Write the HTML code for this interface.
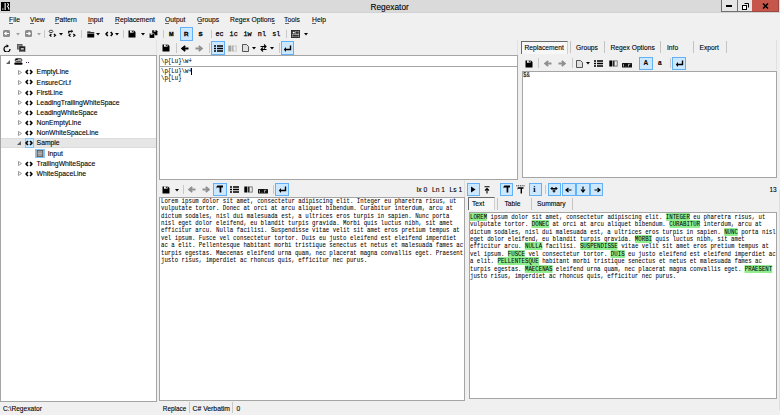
<!DOCTYPE html>
<html><head><meta charset="utf-8"><style>
html,body{margin:0;padding:0;}
.t{position:absolute;white-space:pre;-webkit-text-stroke:0.1px #000;}
.m{position:absolute;white-space:pre;font:6.8px/7.4px "Liberation Mono", monospace;transform:scaleX(0.842);transform-origin:0 0;color:#000;-webkit-text-stroke:0.05px #000;}
body{width:780px;height:415px;position:relative;overflow:hidden;background:#f0f0f0;font-family:"Liberation Sans", sans-serif;}
</style></head><body>
<div style="position:absolute;left:0px;top:0px;width:780px;height:12.6px;background:#dadada"></div>
<div style="position:absolute;left:0px;top:12px;width:780px;height:0.6px;background:#d2d2d2"></div>
<div style="position:absolute;left:1px;top:2px;width:9px;height:9px;background:#000"></div>
<svg style="position:absolute;left:1px;top:2px;" width="9" height="9" viewBox="0 0 9 9"><rect x="1" y="6.2" width="1.6" height="1.8" fill="#777"/><rect x="3.6" y="1" width="1.1" height="7" fill="#fff"/><path d="M6.3 1.3C7.8 1.8 7.8 3.2 6.6 4.3C7.6 5.2 7.9 6.5 8 7.6" stroke="#fff" stroke-width="1.1" fill="none"/></svg>
<div class="t" style="left:370.5px;top:2.8px;font:8.3px/8.3px 'Liberation Sans', sans-serif;color:#000;">Regexator</div>
<div style="position:absolute;left:721px;top:0px;width:17px;height:11.5px;background:#e6e6e6;border:1px solid #707070;border-top:none;box-sizing:border-box"></div>
<div style="position:absolute;left:737px;top:0px;width:16px;height:11.5px;background:#e6e6e6;border:1px solid #707070;border-top:none;box-sizing:border-box"></div>
<div style="position:absolute;left:752px;top:0px;width:27px;height:11.5px;background:#c7564a;border:1px solid #9a4a42;border-top:none;border-left:none;box-sizing:border-box"></div>
<div style="position:absolute;left:726px;top:5px;width:6px;height:2px;background:#000"></div>
<svg style="position:absolute;left:741px;top:2px;" width="8" height="8" viewBox="0 0 8 8"><rect x="1.5" y="3.5" width="4" height="4" fill="#fff" stroke="#000"/><path d="M3.5 1.5H7.5V5.5" fill="none" stroke="#000"/></svg>
<svg style="position:absolute;left:761px;top:2px;" width="9" height="8" viewBox="0 0 9 8"><path d="M2 1.5L7 6.5M7 1.5L2 6.5" stroke="#000" stroke-width="1.6"/></svg>
<div class="t" style="left:9px;top:16.4px;font:7.7px/7.7px 'Liberation Sans', sans-serif;color:#000;transform:scaleX(0.88);transform-origin:0 0">File</div>
<div style="position:absolute;left:9.3px;top:23.2px;width:4px;height:0.8px;background:#666"></div>
<div class="t" style="left:30px;top:16.4px;font:7.7px/7.7px 'Liberation Sans', sans-serif;color:#000;transform:scaleX(0.88);transform-origin:0 0">View</div>
<div style="position:absolute;left:30.3px;top:23.2px;width:4px;height:0.8px;background:#666"></div>
<div class="t" style="left:55px;top:16.4px;font:7.7px/7.7px 'Liberation Sans', sans-serif;color:#000;transform:scaleX(0.88);transform-origin:0 0">Pattern</div>
<div style="position:absolute;left:55.3px;top:23.2px;width:4px;height:0.8px;background:#666"></div>
<div class="t" style="left:88px;top:16.4px;font:7.7px/7.7px 'Liberation Sans', sans-serif;color:#000;transform:scaleX(0.88);transform-origin:0 0">Input</div>
<div style="position:absolute;left:88.3px;top:23.2px;width:4px;height:0.8px;background:#666"></div>
<div class="t" style="left:114.6px;top:16.4px;font:7.7px/7.7px 'Liberation Sans', sans-serif;color:#000;transform:scaleX(0.88);transform-origin:0 0">Replacement</div>
<div style="position:absolute;left:114.89999999999999px;top:23.2px;width:4px;height:0.8px;background:#666"></div>
<div class="t" style="left:165px;top:16.4px;font:7.7px/7.7px 'Liberation Sans', sans-serif;color:#000;transform:scaleX(0.88);transform-origin:0 0">Output</div>
<div style="position:absolute;left:165.3px;top:23.2px;width:4px;height:0.8px;background:#666"></div>
<div class="t" style="left:197.4px;top:16.4px;font:7.7px/7.7px 'Liberation Sans', sans-serif;color:#000;transform:scaleX(0.88);transform-origin:0 0">Groups</div>
<div style="position:absolute;left:197.70000000000002px;top:23.2px;width:4px;height:0.8px;background:#666"></div>
<div class="t" style="left:230px;top:16.4px;font:7.7px/7.7px 'Liberation Sans', sans-serif;color:#000;transform:scaleX(0.88);transform-origin:0 0">Regex Options</div>
<div style="position:absolute;left:271.5px;top:23.2px;width:3.5px;height:0.8px;background:#666"></div>
<div class="t" style="left:284.4px;top:16.4px;font:7.7px/7.7px 'Liberation Sans', sans-serif;color:#000;transform:scaleX(0.88);transform-origin:0 0">Tools</div>
<div style="position:absolute;left:284.7px;top:23.2px;width:4px;height:0.8px;background:#666"></div>
<div class="t" style="left:311.5px;top:16.4px;font:7.7px/7.7px 'Liberation Sans', sans-serif;color:#000;transform:scaleX(0.88);transform-origin:0 0">Help</div>
<div style="position:absolute;left:311.8px;top:23.2px;width:4px;height:0.8px;background:#666"></div>
<div style="position:absolute;left:3.3px;top:30px;width:7px;height:7px;background:#8a8a8a;border-radius:1.5px"></div>
<svg style="position:absolute;left:3px;top:30px;" width="8" height="7" viewBox="0 0 8 7"><path d="M1.8 3.5H6M3.5 1.8L1.8 3.5L3.5 5.2" stroke="#fff" stroke-width="1.2" fill="none"/></svg>
<svg style="position:absolute;left:16px;top:33px;" width="4" height="3" viewBox="0 0 4 3"><path d="M0 0H4L2 2.5Z" fill="#a0a0a0"/></svg>
<div style="position:absolute;left:24.5px;top:30px;width:7px;height:7px;background:#8a8a8a;border-radius:1.5px"></div>
<svg style="position:absolute;left:24.5px;top:30px;" width="7" height="7" viewBox="0 0 7 7"><path d="M1.2 3.5H5.2M3.6 1.8L5.2 3.5L3.6 5.2" stroke="#fff" stroke-width="1.2" fill="none"/></svg>
<svg style="position:absolute;left:37px;top:33px;" width="4" height="3" viewBox="0 0 4 3"><path d="M0 0H4L2 2.5Z" fill="#a0a0a0"/></svg>
<div style="position:absolute;left:44px;top:30px;width:1px;height:8px;background:#c8c8c8"></div>
<svg style="position:absolute;left:48px;top:29px;" width="9" height="9" viewBox="0 0 9 9"><ellipse cx="3" cy="2.4" rx="1.9" ry="1.2" fill="none" stroke="#333" stroke-width="0.9"/><path d="M3.4 5L1.9 6.3L3.4 7.6M5.9 5L7.5 6.3L5.9 7.6" stroke="#000" stroke-width="1.2" fill="none"/></svg>
<svg style="position:absolute;left:59px;top:33px;" width="4" height="3" viewBox="0 0 4 3"><path d="M0 0H4L2 2.5Z" fill="#000"/></svg>
<svg style="position:absolute;left:67px;top:29px;" width="9" height="9" viewBox="0 0 9 9"><path d="M1.8 4.6V2.3H4.6" stroke="#000" stroke-width="1.3" fill="none"/><path d="M4.3 0.6L6.2 2.3L4.3 4Z" fill="#000"/><path d="M3.5 5L2 6.3L3.5 7.6M6.3 5L7.9 6.3L6.3 7.6" stroke="#000" stroke-width="1.2" fill="none"/></svg>
<div style="position:absolute;left:81px;top:30px;width:1px;height:8px;background:#c8c8c8"></div>
<svg style="position:absolute;left:86.5px;top:30.5px;" width="8" height="7" viewBox="0 0 8 7"><path d="M0.3 0.4H3.2L3.8 1H7.2V6.4H0.3Z" fill="#000"/><path d="M0.3 2.2H7.2" stroke="#fff" stroke-width="0.7"/></svg>
<svg style="position:absolute;left:96px;top:33px;" width="4" height="3" viewBox="0 0 4 3"><path d="M0 0H4L2 2.5Z" fill="#000"/></svg>
<svg style="position:absolute;left:104.5px;top:30.5px;" width="8.5" height="6" viewBox="0 0 8.5 6"><path d="M2.8 0.9L1 3L2.8 5.1M5.7 0.9L7.5 3L5.7 5.1" stroke="#000" stroke-width="1.5" fill="none"/></svg>
<svg style="position:absolute;left:115px;top:33px;" width="4" height="3" viewBox="0 0 4 3"><path d="M0 0H4L2 2.5Z" fill="#000"/></svg>
<div style="position:absolute;left:123px;top:30px;width:1px;height:8px;background:#c8c8c8"></div>
<svg style="position:absolute;left:127.5px;top:29.5px;" width="8" height="8" viewBox="0 0 8 8"><path d="M0.5 0.5H6L7.5 2V7.5H0.5Z" fill="#000"/><rect x="2" y="0.5" width="3.5" height="2.2" fill="#fff"/><rect x="3.8" y="0.8" width="1" height="1.5" fill="#000"/></svg>
<svg style="position:absolute;left:141px;top:33px;" width="4" height="3" viewBox="0 0 4 3"><path d="M0 0H4L2 2.5Z" fill="#000"/></svg>
<svg style="position:absolute;left:149px;top:29.5px;" width="9" height="8.5" viewBox="0 0 9 8.5"><path d="M3.2 0.3H7.5L8.4 1.2V5.2H3.2Z" fill="#000"/><rect x="4.8" y="0.3" width="1.8" height="1.3" fill="#fff"/><path d="M0.3 3.3H4.8L5.6 4.1V8.3H0.3Z" fill="#000" stroke="#fff" stroke-width="0.5"/><rect x="1.6" y="3.5" width="1.8" height="1.2" fill="#fff"/></svg>
<div style="position:absolute;left:163px;top:30px;width:1px;height:8px;background:#c8c8c8"></div>
<div class="t" style="left:168.6px;top:31.2px;font:6.2px/6.2px 'Liberation Sans', sans-serif;color:#000;font-weight:bold;-webkit-text-stroke:0.35px #000;transform:scaleX(0.9);transform-origin:0 0">M</div>
<div style="position:absolute;left:180px;top:27px;width:13px;height:13.5px;background:#cce8ff;border:1px solid #62b1f6;box-sizing:border-box"></div>
<div class="t" style="left:184px;top:31.2px;font:6.2px/6.2px 'Liberation Sans', sans-serif;color:#000;font-weight:bold;-webkit-text-stroke:0.35px #000">R</div>
<div class="t" style="left:198.4px;top:31.2px;font:6.2px/6.2px 'Liberation Sans', sans-serif;color:#000;font-weight:bold;-webkit-text-stroke:0.35px #000">S</div>
<div style="position:absolute;left:210.5px;top:30px;width:1px;height:8px;background:#c8c8c8"></div>
<div class="t" style="left:215.5px;top:30.8px;font:6.8px/6.8px 'Liberation Mono', monospace;color:#000;-webkit-text-stroke:0.25px #000">ec</div>
<div class="t" style="left:229.6px;top:30.8px;font:6.8px/6.8px 'Liberation Mono', monospace;color:#000;-webkit-text-stroke:0.25px #000">ic</div>
<div class="t" style="left:243.5px;top:30.8px;font:6.8px/6.8px 'Liberation Mono', monospace;color:#000;-webkit-text-stroke:0.25px #000">iw</div>
<div class="t" style="left:257.8px;top:30.8px;font:6.8px/6.8px 'Liberation Mono', monospace;color:#000;-webkit-text-stroke:0.25px #000">nl</div>
<div class="t" style="left:272.2px;top:30.8px;font:6.8px/6.8px 'Liberation Mono', monospace;color:#000;-webkit-text-stroke:0.25px #000">sl</div>
<div style="position:absolute;left:286px;top:30px;width:1px;height:8px;background:#c8c8c8"></div>
<svg style="position:absolute;left:290.5px;top:29.5px;" width="9" height="8" viewBox="0 0 9 8"><rect x="0.5" y="0.5" width="8" height="7" fill="#bbb" stroke="#222" stroke-width="0.9"/><rect x="1.4" y="1.4" width="2.6" height="2.4" fill="#fff" stroke="#222" stroke-width="0.7"/><rect x="5" y="1.4" width="2.6" height="2.4" fill="#333"/><rect x="1.4" y="4.8" width="6.2" height="1.8" fill="#333"/></svg>
<svg style="position:absolute;left:304px;top:33px;" width="4" height="3" viewBox="0 0 4 3"><path d="M0 0H4L2 2.5Z" fill="#000"/></svg>
<svg style="position:absolute;left:2.5px;top:43.5px;" width="8" height="8.5" viewBox="0 0 8 8.5"><path d="M4 2A3 3 0 1 0 7 5" stroke="#000" stroke-width="1.2" fill="none"/><path d="M3.6 0.2L6 2L3.6 3.8Z" fill="#000"/></svg>
<svg style="position:absolute;left:17px;top:43.8px;" width="8.5" height="8" viewBox="0 0 8.5 8"><rect x="0" y="0" width="5.5" height="5.5" fill="#555"/><rect x="0.8" y="0.8" width="4" height="4" fill="#888"/><rect x="2.3" y="2.3" width="6" height="5.7" fill="#222"/><rect x="3.8" y="4.3" width="3" height="1.2" fill="#fff"/><rect x="2.8" y="6.8" width="5" height="1" fill="#999"/></svg>
<div style="position:absolute;left:156px;top:40px;width:1px;height:15px;background:#e2e2e2"></div>
<svg style="position:absolute;left:161.5px;top:44px;" width="8" height="8" viewBox="0 0 8 8"><path d="M0.5 0.5H6L7.5 2V7.5H0.5Z" fill="#000"/><rect x="2" y="0.5" width="3.5" height="2.2" fill="#fff"/><rect x="3.8" y="0.8" width="1" height="1.5" fill="#000"/></svg>
<div style="position:absolute;left:175.5px;top:43px;width:1px;height:10px;background:#c8c8c8"></div>
<svg style="position:absolute;left:180.5px;top:44.5px;" width="8" height="7" viewBox="0 0 8 7"><path d="M7.5 3.5H2M4.2 0.8L1.2 3.5L4.2 6.2" stroke="#000" stroke-width="1.8" fill="none"/></svg>
<svg style="position:absolute;left:194.5px;top:44.5px;" width="8" height="7" viewBox="0 0 8 7"><path d="M0.5 3.5H6M3.8 0.8L6.8 3.5L3.8 6.2" stroke="#909090" stroke-width="1.8" fill="none"/></svg>
<div style="position:absolute;left:208.5px;top:43px;width:1px;height:10px;background:#c8c8c8"></div>
<div style="position:absolute;left:211px;top:41px;width:14px;height:14px;background:#cce8ff;border:1px solid #62b1f6;box-sizing:border-box"></div>
<svg style="position:absolute;left:213.5px;top:44.5px;" width="9" height="7" viewBox="0 0 9 7"><path d="M0 1H2M3 1H9M0 3.5H2M3 3.5H9M0 6H2M3 6H9" stroke="#000" stroke-width="1.4"/></svg>
<svg style="position:absolute;left:227.5px;top:44.5px;" width="9" height="7" viewBox="0 0 9 7"><rect x="0.3" y="0.5" width="3" height="6" fill="#a0a0a0"/><rect x="3.9" y="0.5" width="0.9" height="6" fill="#a0a0a0"/><rect x="5.4" y="0.9" width="2.8" height="5.2" fill="none" stroke="#a0a0a0" stroke-width="0.8" opacity="0.6"/></svg>
<svg style="position:absolute;left:241.5px;top:44px;" width="7" height="8" viewBox="0 0 7 8"><path d="M0.5 0.5H4.5L6.5 2.5V7.5H0.5Z" fill="#e0e0e0" stroke="#444" stroke-width="0.9"/></svg>
<svg style="position:absolute;left:252px;top:47px;" width="4" height="3" viewBox="0 0 4 3"><path d="M0 0H4L2 2.5Z" fill="#000"/></svg>
<svg style="position:absolute;left:260px;top:44px;" width="7" height="8" viewBox="0 0 7 8"><path d="M0.5 2.5H6M4 0.5L6 2.5L4 4.5M6.5 5.5H1M3 3.5L1 5.5L3 7.5" stroke="#000" stroke-width="1.1" fill="none"/></svg>
<svg style="position:absolute;left:270px;top:47px;" width="4" height="3" viewBox="0 0 4 3"><path d="M0 0H4L2 2.5Z" fill="#000"/></svg>
<div style="position:absolute;left:278.5px;top:43px;width:1px;height:10px;background:#c8c8c8"></div>
<div style="position:absolute;left:281px;top:41px;width:13px;height:14px;background:#cce8ff;border:1px solid #62b1f6;box-sizing:border-box"></div>
<svg style="position:absolute;left:283px;top:44.5px;" width="9" height="7" viewBox="0 0 9 7"><path d="M7.5 0.5V4.5H2" stroke="#000" stroke-width="1.4" fill="none"/><path d="M3 2L0.8 4.5L3 7Z" fill="#000"/></svg>
<div style="position:absolute;left:159px;top:55px;width:359px;height:12px;background:#fff;border:1px solid #a5a5a5;box-sizing:border-box"></div>
<div style="position:absolute;left:159px;top:66px;width:359px;height:114px;background:#fff;border:1px solid #a5a5a5;box-sizing:border-box"></div>
<div class="m" style="left:160.5px;top:57.6px">\p{Lu}\w+</div>
<div class="m" style="left:160.5px;top:67.6px">\p{Lu}\w+
\p{Lu}</div>
<div style="position:absolute;left:191px;top:68px;width:0.8px;height:7px;background:#000"></div>
<div style="position:absolute;left:520.5px;top:40.5px;width:47px;height:13px;background:#f7f7f7;border:1px solid #6a6a6a;border-right-color:#d0d0d0;border-bottom:none;box-sizing:border-box"></div>
<div class="t" style="left:524.5px;top:44.9px;font:6.7px/6.7px 'Liberation Sans', sans-serif;color:#000;">Replacement</div>
<div style="position:absolute;left:569.5px;top:41px;width:1px;height:12px;background:#c4c4c4"></div>
<div style="position:absolute;left:603.5px;top:41px;width:1px;height:12px;background:#c4c4c4"></div>
<div style="position:absolute;left:659.5px;top:41px;width:1px;height:12px;background:#c4c4c4"></div>
<div style="position:absolute;left:693px;top:41px;width:1px;height:12px;background:#c4c4c4"></div>
<div style="position:absolute;left:725.5px;top:41px;width:1px;height:12px;background:#c4c4c4"></div>
<div class="t" style="left:576px;top:44.9px;font:6.7px/6.7px 'Liberation Sans', sans-serif;color:#000;">Groups</div>
<div class="t" style="left:610.5px;top:44.9px;font:6.7px/6.7px 'Liberation Sans', sans-serif;color:#000;">Regex Options</div>
<div class="t" style="left:667px;top:44.9px;font:6.7px/6.7px 'Liberation Sans', sans-serif;color:#000;">Info</div>
<div class="t" style="left:699.5px;top:44.9px;font:6.7px/6.7px 'Liberation Sans', sans-serif;color:#000;">Export</div>
<svg style="position:absolute;left:524.5px;top:59.5px;" width="8" height="8" viewBox="0 0 8 8"><path d="M0.5 0.5H6L7.5 2V7.5H0.5Z" fill="#000"/><rect x="2" y="0.5" width="3.5" height="2.2" fill="#fff"/><rect x="3.8" y="0.8" width="1" height="1.5" fill="#000"/></svg>
<div style="position:absolute;left:538px;top:58px;width:1px;height:10px;background:#c8c8c8"></div>
<svg style="position:absolute;left:543.5px;top:60px;" width="8" height="7" viewBox="0 0 8 7"><path d="M7.5 3.5H2M4.2 0.8L1.2 3.5L4.2 6.2" stroke="#909090" stroke-width="1.8" fill="none"/></svg>
<svg style="position:absolute;left:558px;top:60px;" width="8" height="7" viewBox="0 0 8 7"><path d="M0.5 3.5H6M3.8 0.8L6.8 3.5L3.8 6.2" stroke="#909090" stroke-width="1.8" fill="none"/></svg>
<div style="position:absolute;left:572px;top:58px;width:1px;height:10px;background:#c8c8c8"></div>
<svg style="position:absolute;left:576px;top:59.5px;" width="7" height="8" viewBox="0 0 7 8"><path d="M0.5 0.5H4.5L6.5 2.5V7.5H0.5Z" fill="#e0e0e0" stroke="#444" stroke-width="0.9"/></svg>
<svg style="position:absolute;left:586px;top:62px;" width="4" height="3" viewBox="0 0 4 3"><path d="M0 0H4L2 2.5Z" fill="#000"/></svg>
<svg style="position:absolute;left:594px;top:60px;" width="9" height="7" viewBox="0 0 9 7"><path d="M0 1H2M3 1H9M0 3.5H2M3 3.5H9M0 6H2M3 6H9" stroke="#000" stroke-width="1.4"/></svg>
<svg style="position:absolute;left:608.5px;top:60px;" width="9" height="7" viewBox="0 0 9 7"><rect x="0.3" y="0.5" width="3" height="6" fill="#000"/><rect x="3.9" y="0.5" width="0.9" height="6" fill="#000"/><rect x="5.4" y="0.9" width="2.8" height="5.2" fill="none" stroke="#000" stroke-width="0.8" opacity="0.6"/></svg>
<svg style="position:absolute;left:622px;top:62.5px;" width="10" height="5" viewBox="0 0 10 5"><rect x="0" y="0" width="10" height="4.6" rx="0.6" fill="#111"/><path d="M1.5 1.2V3.6M4 3.2V3.6M6.5 3.6V1.2H8.3" stroke="#ddd" stroke-width="0.7" fill="none"/></svg>
<div style="position:absolute;left:639px;top:57px;width:14px;height:12.5px;background:#cce8ff;border:1px solid #62b1f6;box-sizing:border-box"></div>
<div class="t" style="left:643.5px;top:60px;font:6.5px/6.5px 'Liberation Sans', sans-serif;color:#000;font-weight:bold">A</div>
<div class="t" style="left:658px;top:60px;font:6.5px/6.5px 'Liberation Sans', sans-serif;color:#000;font-weight:bold">a</div>
<div style="position:absolute;left:669.5px;top:58px;width:1px;height:10px;background:#c8c8c8"></div>
<div style="position:absolute;left:672px;top:57px;width:14px;height:12.5px;background:#cce8ff;border:1px solid #62b1f6;box-sizing:border-box"></div>
<svg style="position:absolute;left:675px;top:59.5px;" width="9" height="7" viewBox="0 0 9 7"><path d="M7.5 0.5V4.5H2" stroke="#000" stroke-width="1.4" fill="none"/><path d="M3 2L0.8 4.5L3 7Z" fill="#000"/></svg>
<div style="position:absolute;left:776px;top:40px;width:1px;height:30px;background:#e0e0e0"></div>
<div style="position:absolute;left:522px;top:71px;width:255px;height:107px;background:#fff;border:1px solid #a5a5a5;box-sizing:border-box"></div>
<div style="position:absolute;left:517px;top:40px;width:1px;height:15px;background:#e2e2e2"></div>
<div class="m" style="left:523px;top:71.6px">$&amp;</div>
<div style="position:absolute;left:0px;top:55px;width:157px;height:347px;background:#fff;border:1px solid #a5a5a5;box-sizing:border-box"></div>
<svg style="position:absolute;left:6px;top:60px;" width="4" height="4" viewBox="0 0 4 4"><path d="M4 0V4H0Z" fill="#606060"/></svg>
<svg style="position:absolute;left:14px;top:57.5px;" width="9" height="7" viewBox="0 0 9 7"><rect x="1.2" y="0.6" width="6.6" height="3" rx="1.2" fill="#b0b0b0" stroke="#111" stroke-width="0.7"/><rect x="1.6" y="0.9" width="2.2" height="1" fill="#000"/><rect x="0.3" y="4.4" width="8.2" height="2.3" rx="0.9" fill="#000"/></svg>
<div style="position:absolute;left:26.2px;top:62px;width:1.1px;height:1.1px;background:#402050"></div>
<div style="position:absolute;left:28.2px;top:62px;width:1.1px;height:1.1px;background:#402080"></div>
<svg style="position:absolute;left:17.5px;top:69.7px;" width="4" height="5" viewBox="0 0 4 5"><path d="M0.5 0.5L3.5 2.5L0.5 4.5Z" fill="none" stroke="#808080" stroke-width="0.8"/></svg>
<svg style="position:absolute;left:25px;top:69.3px;" width="8" height="6" viewBox="0 0 8 6"><path d="M2.9 0.9L1.1 3L2.9 5.1M5.1 0.9L6.9 3L5.1 5.1" stroke="#000" stroke-width="1.6" fill="none"/></svg>
<div class="t" style="left:36.6px;top:69.4px;font:6.8px/6.8px 'Liberation Sans', sans-serif;color:#000;">EmptyLine</div>
<svg style="position:absolute;left:17.5px;top:79.85000000000001px;" width="4" height="5" viewBox="0 0 4 5"><path d="M0.5 0.5L3.5 2.5L0.5 4.5Z" fill="none" stroke="#808080" stroke-width="0.8"/></svg>
<svg style="position:absolute;left:25px;top:79.45px;" width="8" height="6" viewBox="0 0 8 6"><path d="M2.9 0.9L1.1 3L2.9 5.1M5.1 0.9L6.9 3L5.1 5.1" stroke="#000" stroke-width="1.6" fill="none"/></svg>
<div class="t" style="left:36.6px;top:79.55000000000001px;font:6.8px/6.8px 'Liberation Sans', sans-serif;color:#000;">EnsureCrLf</div>
<svg style="position:absolute;left:17.5px;top:90.0px;" width="4" height="5" viewBox="0 0 4 5"><path d="M0.5 0.5L3.5 2.5L0.5 4.5Z" fill="none" stroke="#808080" stroke-width="0.8"/></svg>
<svg style="position:absolute;left:25px;top:89.6px;" width="8" height="6" viewBox="0 0 8 6"><path d="M2.9 0.9L1.1 3L2.9 5.1M5.1 0.9L6.9 3L5.1 5.1" stroke="#000" stroke-width="1.6" fill="none"/></svg>
<div class="t" style="left:36.6px;top:89.7px;font:6.8px/6.8px 'Liberation Sans', sans-serif;color:#000;">FirstLine</div>
<svg style="position:absolute;left:17.5px;top:100.15px;" width="4" height="5" viewBox="0 0 4 5"><path d="M0.5 0.5L3.5 2.5L0.5 4.5Z" fill="none" stroke="#808080" stroke-width="0.8"/></svg>
<svg style="position:absolute;left:25px;top:99.75px;" width="8" height="6" viewBox="0 0 8 6"><path d="M2.9 0.9L1.1 3L2.9 5.1M5.1 0.9L6.9 3L5.1 5.1" stroke="#000" stroke-width="1.6" fill="none"/></svg>
<div class="t" style="left:36.6px;top:99.85000000000001px;font:6.8px/6.8px 'Liberation Sans', sans-serif;color:#000;">LeadingTrailingWhiteSpace</div>
<svg style="position:absolute;left:17.5px;top:110.30000000000001px;" width="4" height="5" viewBox="0 0 4 5"><path d="M0.5 0.5L3.5 2.5L0.5 4.5Z" fill="none" stroke="#808080" stroke-width="0.8"/></svg>
<svg style="position:absolute;left:25px;top:109.9px;" width="8" height="6" viewBox="0 0 8 6"><path d="M2.9 0.9L1.1 3L2.9 5.1M5.1 0.9L6.9 3L5.1 5.1" stroke="#000" stroke-width="1.6" fill="none"/></svg>
<div class="t" style="left:36.6px;top:110.00000000000001px;font:6.8px/6.8px 'Liberation Sans', sans-serif;color:#000;">LeadingWhiteSpace</div>
<svg style="position:absolute;left:17.5px;top:120.45px;" width="4" height="5" viewBox="0 0 4 5"><path d="M0.5 0.5L3.5 2.5L0.5 4.5Z" fill="none" stroke="#808080" stroke-width="0.8"/></svg>
<svg style="position:absolute;left:25px;top:120.05px;" width="8" height="6" viewBox="0 0 8 6"><path d="M2.9 0.9L1.1 3L2.9 5.1M5.1 0.9L6.9 3L5.1 5.1" stroke="#000" stroke-width="1.6" fill="none"/></svg>
<div class="t" style="left:36.6px;top:120.15px;font:6.8px/6.8px 'Liberation Sans', sans-serif;color:#000;">NonEmptyLine</div>
<svg style="position:absolute;left:17.5px;top:130.60000000000002px;" width="4" height="5" viewBox="0 0 4 5"><path d="M0.5 0.5L3.5 2.5L0.5 4.5Z" fill="none" stroke="#808080" stroke-width="0.8"/></svg>
<svg style="position:absolute;left:25px;top:130.20000000000002px;" width="8" height="6" viewBox="0 0 8 6"><path d="M2.9 0.9L1.1 3L2.9 5.1M5.1 0.9L6.9 3L5.1 5.1" stroke="#000" stroke-width="1.6" fill="none"/></svg>
<div class="t" style="left:36.6px;top:130.3px;font:6.8px/6.8px 'Liberation Sans', sans-serif;color:#000;">NonWhiteSpaceLine</div>
<div style="position:absolute;left:1px;top:138.2px;width:155px;height:9.5px;background:#e6e6e6;border-top:1px solid #dcdcdc;border-bottom:1px solid #dcdcdc;box-sizing:border-box"></div>
<svg style="position:absolute;left:17px;top:141.25px;" width="4" height="4" viewBox="0 0 4 4"><path d="M4 0V4H0Z" fill="#606060"/></svg>
<div style="position:absolute;left:24.5px;top:138.2px;width:9.5px;height:9.5px;background:#cce8ff;border:1px solid #84c4f5;box-sizing:border-box"></div>
<svg style="position:absolute;left:25px;top:140.35px;" width="8" height="6" viewBox="0 0 8 6"><path d="M2.9 0.9L1.1 3L2.9 5.1M5.1 0.9L6.9 3L5.1 5.1" stroke="#000" stroke-width="1.6" fill="none"/></svg>
<div class="t" style="left:36.6px;top:140.45px;font:6.8px/6.8px 'Liberation Sans', sans-serif;color:#000;">Sample</div>
<div style="position:absolute;left:35px;top:148.8px;width:10px;height:9px;background:#cce8ff;border:1px solid #84c4f5;box-sizing:border-box"></div>
<svg style="position:absolute;left:36px;top:149.5px;" width="8" height="7.5" viewBox="0 0 8 7.5"><rect x="1" y="0.5" width="6" height="6.5" fill="#888" stroke="#333" stroke-width="0.6"/><path d="M2 2H6M2 3.5H6M2 5H6" stroke="#ddd" stroke-width="0.5"/></svg>
<div class="t" style="left:47.7px;top:150.6px;font:6.8px/6.8px 'Liberation Sans', sans-serif;color:#000;">Input</div>
<svg style="position:absolute;left:17.5px;top:161.05px;" width="4" height="5" viewBox="0 0 4 5"><path d="M0.5 0.5L3.5 2.5L0.5 4.5Z" fill="none" stroke="#808080" stroke-width="0.8"/></svg>
<svg style="position:absolute;left:25px;top:160.65px;" width="8" height="6" viewBox="0 0 8 6"><path d="M2.9 0.9L1.1 3L2.9 5.1M5.1 0.9L6.9 3L5.1 5.1" stroke="#000" stroke-width="1.6" fill="none"/></svg>
<div class="t" style="left:36.6px;top:160.75px;font:6.8px/6.8px 'Liberation Sans', sans-serif;color:#000;">TrailingWhiteSpace</div>
<svg style="position:absolute;left:17.5px;top:171.2px;" width="4" height="5" viewBox="0 0 4 5"><path d="M0.5 0.5L3.5 2.5L0.5 4.5Z" fill="none" stroke="#808080" stroke-width="0.8"/></svg>
<svg style="position:absolute;left:25px;top:170.79999999999998px;" width="8" height="6" viewBox="0 0 8 6"><path d="M2.9 0.9L1.1 3L2.9 5.1M5.1 0.9L6.9 3L5.1 5.1" stroke="#000" stroke-width="1.6" fill="none"/></svg>
<div class="t" style="left:36.6px;top:170.89999999999998px;font:6.8px/6.8px 'Liberation Sans', sans-serif;color:#000;">WhiteSpaceLine</div>
<svg style="position:absolute;left:161.5px;top:185.5px;" width="8" height="8" viewBox="0 0 8 8"><path d="M0.5 0.5H6L7.5 2V7.5H0.5Z" fill="#000"/><rect x="2" y="0.5" width="3.5" height="2.2" fill="#fff"/><rect x="3.8" y="0.8" width="1" height="1.5" fill="#000"/></svg>
<svg style="position:absolute;left:175px;top:188.5px;" width="4" height="3" viewBox="0 0 4 3"><path d="M0 0H4L2 2.5Z" fill="#000"/></svg>
<div style="position:absolute;left:182.5px;top:185px;width:1px;height:9px;background:#c8c8c8"></div>
<svg style="position:absolute;left:187.5px;top:186px;" width="8" height="7" viewBox="0 0 8 7"><path d="M7.5 3.5H2M4.2 0.8L1.2 3.5L4.2 6.2" stroke="#909090" stroke-width="1.8" fill="none"/></svg>
<svg style="position:absolute;left:201.5px;top:186px;" width="8" height="7" viewBox="0 0 8 7"><path d="M0.5 3.5H6M3.8 0.8L6.8 3.5L3.8 6.2" stroke="#909090" stroke-width="1.8" fill="none"/></svg>
<div style="position:absolute;left:213px;top:183px;width:14px;height:13px;background:#cce8ff;border:1px solid #62b1f6;box-sizing:border-box"></div>
<svg style="position:absolute;left:216px;top:185.3px;" width="7.5" height="8" viewBox="0 0 7.5 8"><path d="M2 0.6H7V2.6H5.3V7.6H3.6V2.6H2.6C1.3 2.6 0.6 3.2 0.6 3.6V1.9C0.6 1.2 1.1 0.6 2 0.6Z" fill="#000"/></svg>
<svg style="position:absolute;left:230px;top:186px;" width="9" height="7" viewBox="0 0 9 7"><path d="M0 1H2M3 1H9M0 3.5H2M3 3.5H9M0 6H2M3 6H9" stroke="#000" stroke-width="1.4"/></svg>
<svg style="position:absolute;left:244px;top:186px;" width="9" height="7" viewBox="0 0 9 7"><rect x="0.3" y="0.5" width="3" height="6" fill="#000"/><rect x="3.9" y="0.5" width="0.9" height="6" fill="#000"/><rect x="5.4" y="0.9" width="2.8" height="5.2" fill="none" stroke="#000" stroke-width="0.8" opacity="0.6"/></svg>
<svg style="position:absolute;left:257.5px;top:188.8px;" width="10" height="5" viewBox="0 0 10 5"><rect x="0" y="0" width="10" height="4.6" rx="0.6" fill="#111"/><path d="M1.5 1.2V3.6M4 3.2V3.6M6.5 3.6V1.2H8.3" stroke="#ddd" stroke-width="0.7" fill="none"/></svg>
<div style="position:absolute;left:272.5px;top:185px;width:1px;height:9px;background:#c8c8c8"></div>
<div style="position:absolute;left:275px;top:183px;width:14px;height:13px;background:#cce8ff;border:1px solid #62b1f6;box-sizing:border-box"></div>
<svg style="position:absolute;left:277.5px;top:186px;" width="9" height="7" viewBox="0 0 9 7"><path d="M7.5 0.5V4.5H2" stroke="#000" stroke-width="1.4" fill="none"/><path d="M3 2L0.8 4.5L3 7Z" fill="#000"/></svg>
<div class="t" style="left:416.5px;top:187px;font:6.7px/6.7px 'Liberation Sans', sans-serif;color:#000;">Ix 0</div>
<div class="t" style="left:432px;top:187px;font:6.7px/6.7px 'Liberation Sans', sans-serif;color:#000;">Ln 1</div>
<div class="t" style="left:449.5px;top:187px;font:6.7px/6.7px 'Liberation Sans', sans-serif;color:#000;">Ls 1</div>
<div style="position:absolute;left:464px;top:180px;width:1px;height:20px;background:#e0e0e0"></div>
<div style="position:absolute;left:159px;top:197px;width:306px;height:204px;background:#fff;border:1px solid #a5a5a5;box-sizing:border-box"></div>
<div class="m" style="left:160.6px;top:197.6px;line-height:7.45px">Lorem ipsum dolor sit amet, consectetur adipiscing elit. Integer eu pharetra risus, ut
vulputate tortor. Donec at orci at arcu aliquet bibendum. Curabitur interdum, arcu at
dictum sodales, nisl dui malesuada est, a ultrices eros turpis in sapien. Nunc porta
nisl eget dolor eleifend, eu blandit turpis gravida. Morbi quis luctus nibh, sit amet
efficitur arcu. Nulla facilisi. Suspendisse vitae velit sit amet eros pretium tempus at
vel ipsum. Fusce vel consectetur tortor. Duis eu justo eleifend est eleifend imperdiet
ac a elit. Pellentesque habitant morbi tristique senectus et netus et malesuada fames ac
turpis egestas. Maecenas eleifend urna quam, nec placerat magna convallis eget. Praesent
justo risus, imperdiet ac rhoncus quis, efficitur nec purus.</div>
<div style="position:absolute;left:466.5px;top:183px;width:13.5px;height:13px;background:#cce8ff;border:1px solid #62b1f6;box-sizing:border-box"></div>
<svg style="position:absolute;left:470px;top:186px;" width="6" height="7" viewBox="0 0 6 7"><path d="M1 0.5L5.5 3.5L1 6.5Z" fill="#000"/></svg>
<svg style="position:absolute;left:484px;top:185.5px;" width="6" height="8" viewBox="0 0 6 8"><path d="M0.5 0.8H5.5M3 2.5V7.5M1 4.5L3 2.5L5 4.5" stroke="#000" stroke-width="1.1" fill="none"/></svg>
<div style="position:absolute;left:499.5px;top:183px;width:13.5px;height:13px;background:#cce8ff;border:1px solid #62b1f6;box-sizing:border-box"></div>
<svg style="position:absolute;left:502.5px;top:185.3px;" width="7.5" height="8" viewBox="0 0 7.5 8"><path d="M2 0.6H7V2.6H5.3V7.6H3.6V2.6H2.6C1.3 2.6 0.6 3.2 0.6 3.6V1.9C0.6 1.2 1.1 0.6 2 0.6Z" fill="#000"/></svg>
<svg style="position:absolute;left:516px;top:184.8px;" width="9" height="9" viewBox="0 0 9 9"><path d="M0.3 0.8H8.7" stroke="#000" stroke-width="0.9" stroke-dasharray="1 0.8"/><path d="M2.5 2.3H7.5V3.8H6V8.5H4.6V3.8H3.2C2.2 3.8 1.5 4.4 1.5 4.7V3.4C1.5 2.8 1.9 2.3 2.5 2.3Z" fill="#000"/></svg>
<div style="position:absolute;left:528.5px;top:183px;width:13.5px;height:13px;background:#cce8ff;border:1px solid #62b1f6;box-sizing:border-box"></div>
<div class="t" style="left:533.3px;top:185.8px;font:8px/8px 'Liberation Serif', serif;color:#000;font-weight:bold">i</div>
<div style="position:absolute;left:544.5px;top:185px;width:1px;height:9px;background:#c8c8c8"></div>
<div style="position:absolute;left:547.5px;top:183px;width:13.5px;height:13px;background:#cce8ff;border:1px solid #62b1f6;box-sizing:border-box"></div>
<div style="position:absolute;left:561.5px;top:183px;width:14.0px;height:13px;background:#cce8ff;border:1px solid #62b1f6;box-sizing:border-box"></div>
<div style="position:absolute;left:575.5px;top:183px;width:14.0px;height:13px;background:#cce8ff;border:1px solid #62b1f6;box-sizing:border-box"></div>
<div style="position:absolute;left:590px;top:183px;width:13px;height:13px;background:#cce8ff;border:1px solid #62b1f6;box-sizing:border-box"></div>
<svg style="position:absolute;left:550px;top:186px;" width="8" height="7" viewBox="0 0 8 7"><path d="M0.5 2.5H7.5M2 1V4M6 1V4M4 3V6.5M2.5 5H5.5" stroke="#000" stroke-width="1.2"/></svg>
<svg style="position:absolute;left:565px;top:186.5px;" width="7" height="6" viewBox="0 0 7 6"><path d="M6.5 3H1.5M3.5 1L1 3L3.5 5" stroke="#000" stroke-width="1.2" fill="none"/></svg>
<svg style="position:absolute;left:579.5px;top:186px;" width="6" height="7" viewBox="0 0 6 7"><path d="M3 0.5V5.5M1 3.5L3 6L5 3.5" stroke="#000" stroke-width="1.2" fill="none"/></svg>
<svg style="position:absolute;left:593.5px;top:186.5px;" width="7" height="6" viewBox="0 0 7 6"><path d="M0.5 3H5.5M3.5 1L6 3L3.5 5" stroke="#000" stroke-width="1.2" fill="none"/></svg>
<div class="t" style="left:769.5px;top:186.5px;font:6.5px/6.5px 'Liberation Sans', sans-serif;color:#000;">13</div>
<div style="position:absolute;left:779px;top:190px;width:1px;height:220px;background:#dedede"></div>
<div style="position:absolute;left:468px;top:197px;width:27px;height:12.5px;background:#f7f7f7;border:1px solid #6a6a6a;border-right-color:#d0d0d0;border-bottom:none;box-sizing:border-box"></div>
<div class="t" style="left:472px;top:201px;font:6.7px/6.7px 'Liberation Sans', sans-serif;color:#000;">Text</div>
<div style="position:absolute;left:497px;top:197.5px;width:1px;height:12.0px;background:#c4c4c4"></div>
<div class="t" style="left:504.5px;top:201px;font:6.7px/6.7px 'Liberation Sans', sans-serif;color:#000;">Table</div>
<div style="position:absolute;left:530.5px;top:197.5px;width:1px;height:12.0px;background:#c4c4c4"></div>
<div class="t" style="left:537px;top:201px;font:6.7px/6.7px 'Liberation Sans', sans-serif;color:#000;">Summary</div>
<div style="position:absolute;left:572px;top:197.5px;width:1px;height:12.0px;background:#c4c4c4"></div>
<div style="position:absolute;left:469px;top:212px;width:308px;height:187px;background:#fff;border:1px solid #a5a5a5;box-sizing:border-box"></div>
<div class="m" style="left:469.9px;top:213.8px"><span style="background:#90ee90">LOREM</span> ipsum dolor sit amet, consectetur adipiscing elit. <span style="background:#90ee90">INTEGER</span> eu pharetra risus, ut
vulputate tortor. <span style="background:#90ee90">DONEC</span> at orci at arcu aliquet bibendum. <span style="background:#90ee90">CURABITUR</span> interdum, arcu at
dictum sodales, nisl dui malesuada est, a ultrices eros turpis in sapien. <span style="background:#90ee90">NUNC</span> porta nisl
eget dolor eleifend, eu blandit turpis gravida. <span style="background:#90ee90">MORBI</span> quis luctus nibh, sit amet
efficitur arcu. <span style="background:#90ee90">NULLA</span> facilisi. <span style="background:#90ee90">SUSPENDISSE</span> vitae velit sit amet eros pretium tempus at
vel ipsum. <span style="background:#90ee90">FUSCE</span> vel consectetur tortor. <span style="background:#90ee90">DUIS</span> eu justo eleifend est eleifend imperdiet ac
a elit. <span style="background:#90ee90">PELLENTESQUE</span> habitant morbi tristique senectus et netus et malesuada fames ac
turpis egestas. <span style="background:#90ee90">MAECENAS</span> eleifend urna quam, nec placerat magna convallis eget. <span style="background:#90ee90">PRAESENT</span>
justo risus, imperdiet ac rhoncus quis, efficitur nec purus.</div>
<div class="t" style="left:3px;top:405.5px;font:6.6px/6.6px 'Liberation Sans', sans-serif;color:#000;">C:\Regexator</div>
<div class="t" style="left:162.8px;top:405.5px;font:6.4px/6.4px 'Liberation Sans', sans-serif;color:#000;">Replace</div>
<div style="position:absolute;left:188.5px;top:402px;width:1px;height:11px;background:#c8c8c8"></div>
<div class="t" style="left:192.6px;top:405.5px;font:6.8px/6.8px 'Liberation Sans', sans-serif;color:#000;">C# Verbatim</div>
<div style="position:absolute;left:232.3px;top:402px;width:1px;height:11px;background:#c8c8c8"></div>
<div class="t" style="left:236.6px;top:405.5px;font:6.6px/6.6px 'Liberation Sans', sans-serif;color:#000;">0</div>
</body></html>
